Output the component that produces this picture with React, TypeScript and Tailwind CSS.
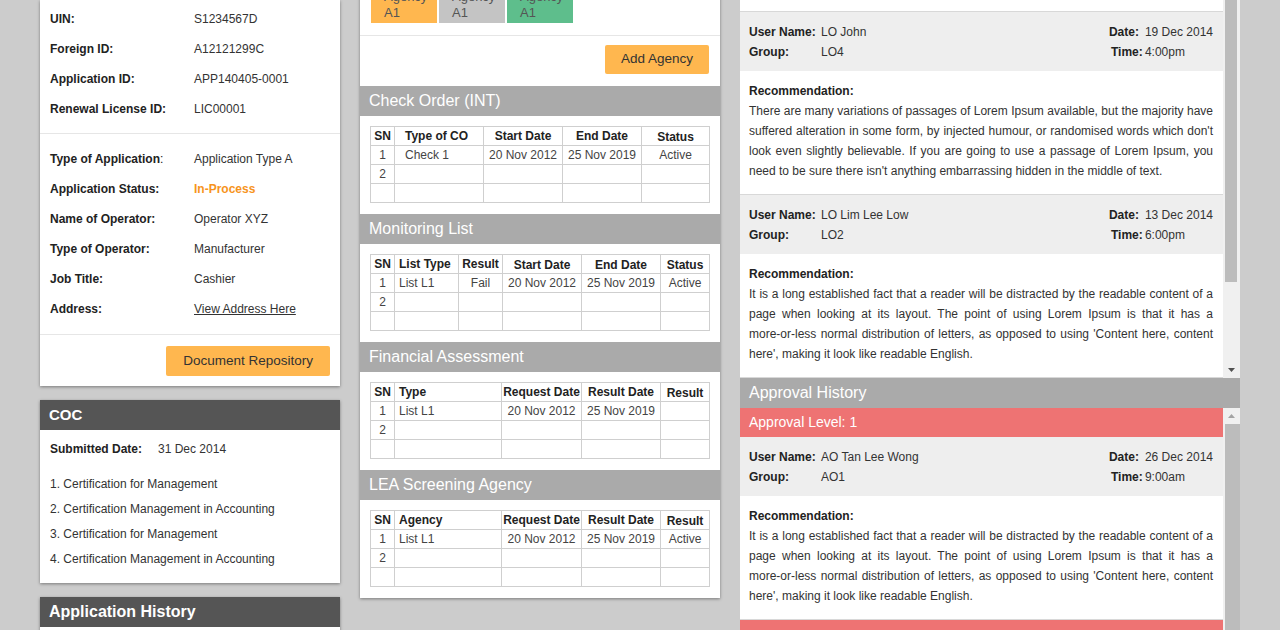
import React from 'react';

type Col = { label: string; w: number; left?: boolean; low?: boolean };

interface TableSpec {
  title: string;
  cols: Col[];
  rows: string[][];
}

const tables: TableSpec[] = [
  {
    title: 'Check Order (INT)',
    cols: [
      { label: 'SN', w: 24 },
      { label: 'Type of CO', w: 89, left: true },
      { label: 'Start Date', w: 79 },
      { label: 'End Date', w: 79 },
      { label: 'Status', w: 68, low: true },
    ],
    rows: [
      ['1', 'Check 1', '20 Nov 2012', '25 Nov 2019', 'Active'],
      ['2', '', '', '', ''],
      ['', '', '', '', ''],
    ],
  },
  {
    title: 'Monitoring List',
    cols: [
      { label: 'SN', w: 24 },
      { label: 'List Type', w: 64, left: true },
      { label: 'Result', w: 44 },
      { label: 'Start Date', w: 79, low: true },
      { label: 'End Date', w: 79, low: true },
      { label: 'Status', w: 49, low: true },
    ],
    rows: [
      ['1', 'List L1', 'Fail', '20 Nov 2012', '25 Nov 2019', 'Active'],
      ['2', '', '', '', '', ''],
      ['', '', '', '', '', ''],
    ],
  },
  {
    title: 'Financial Assessment',
    cols: [
      { label: 'SN', w: 24 },
      { label: 'Type', w: 107, left: true },
      { label: 'Request Date', w: 80 },
      { label: 'Result Date', w: 79 },
      { label: 'Result', w: 49, low: true },
    ],
    rows: [
      ['1', 'List L1', '20 Nov 2012', '25 Nov 2019', ''],
      ['2', '', '', '', ''],
      ['', '', '', '', ''],
    ],
  },
  {
    title: 'LEA Screening Agency',
    cols: [
      { label: 'SN', w: 24 },
      { label: 'Agency', w: 107, left: true },
      { label: 'Request Date', w: 80 },
      { label: 'Result Date', w: 79 },
      { label: 'Result', w: 49, low: true },
    ],
    rows: [
      ['1', 'List L1', '20 Nov 2012', '25 Nov 2019', 'Active'],
      ['2', '', '', '', ''],
      ['', '', '', '', ''],
    ],
  },
];

const InfoRow: React.FC<{ label: string; children: React.ReactNode }> = ({ label, children }) => (
  <div className="flex h-[30px] items-center">
    <span className="w-[144px] font-bold text-[#222]">{label}</span>
    <span className="text-[#333]">{children}</span>
  </div>
);

const DataTable: React.FC<{ spec: TableSpec }> = ({ spec }) => {
  const leftPad = spec.title === 'Check Order (INT)' ? 'pl-[10px] text-left' : 'pl-[4px] text-left';
  return (
    <div>
      <div className="h-[30px] bg-[#aaaaaa] pl-[9px] text-[16px] leading-[30px] text-white">{spec.title}</div>
      <div className="px-[10px] pt-[10px] pb-[11px]">
        <table className="w-[339px] table-fixed border-collapse">
          <colgroup>
            {spec.cols.map((c, i) => (
              <col key={i} style={{ width: c.w }} />
            ))}
          </colgroup>
          <thead>
            <tr className="h-[19px]">
              {spec.cols.map((c, i) => (
                <th
                  key={i}
                  className={`border border-[#cfcfcf] p-0 font-bold text-[#222] ${c.left ? leftPad : 'text-center'} ${
                    c.low ? 'pt-[2px] leading-[16px]' : 'leading-[17px]'
                  }`}
                >
                  {c.label}
                </th>
              ))}
            </tr>
          </thead>
          <tbody>
            {spec.rows.map((r, ri) => (
              <tr key={ri} className="h-[19px]">
                {r.map((v, ci) => (
                  <td
                    key={ci}
                    className={`border border-[#cfcfcf] p-0 leading-[18px] text-[#444] ${
                      spec.cols[ci].left ? leftPad : 'text-center'
                    }`}
                  >
                    {v}
                  </td>
                ))}
              </tr>
            ))}
          </tbody>
        </table>
      </div>
    </div>
  );
};

interface Entry {
  user: string;
  group: string;
  date: string;
  time: string;
  text: React.ReactNode;
}

const longText = (
  <>
    It is a long established fact that a reader will be distracted by the readable content of a page when looking at
    its layout. The point of using Lorem Ipsum is that it has a{' '}
    <span className="whitespace-nowrap">more-or-less</span> normal distribution of letters, as opposed to using
    'Content here, content here', making it look like readable English.
  </>
);

const recommendations: Entry[] = [
  {
    user: 'LO John',
    group: 'LO4',
    date: '19 Dec 2014',
    time: '4:00pm',
    text: "There are many variations of passages of Lorem Ipsum available, but the majority have suffered alteration in some form, by injected humour, or randomised words which don't look even slightly believable. If you are going to use a passage of Lorem Ipsum, you need to be sure there isn't anything embarrassing hidden in the middle of text.",
  },
  { user: 'LO Lim Lee Low', group: 'LO2', date: '13 Dec 2014', time: '6:00pm', text: longText },
];

const EntryBlock: React.FC<{ e: Entry }> = ({ e }) => (
  <div className="border-b border-[#d8d8d8]">
    <div className="flex justify-between bg-[#eeeeee] pt-[10px] pr-[10px] pb-[9px] pl-[9px] leading-[20px]">
      <div className="grid grid-cols-[72px_auto]">
        <span className="font-bold text-[#222]">User Name:</span>
        <span>{e.user}</span>
        <span className="font-bold text-[#222]">Group:</span>
        <span>{e.group}</span>
      </div>
      <div className="grid grid-cols-[36px_auto] whitespace-nowrap">
        <span className="font-bold text-[#222]">Date:</span>
        <span>{e.date}</span>
        <span className="pl-[2px] font-bold text-[#222]">Time:</span>
        <span>{e.time}</span>
      </div>
    </div>
    <div className="bg-white pt-[10px] pr-[10px] pb-[13px] pl-[9px] leading-[20px]">
      <div className="font-bold text-[#222]">Recommendation:</div>
      <p className="text-justify">{e.text}</p>
    </div>
  </div>
);

const Arrow: React.FC<{ up?: boolean; color: string }> = ({ up, color }) => (
  <svg width="7" height="4" viewBox="0 0 7 4">
    <path d={up ? 'M0 4h7L3.5 0z' : 'M0 0h7L3.5 4z'} fill={color} />
  </svg>
);

const Tag: React.FC<{ bg: string }> = ({ bg }) => (
  <div className={`w-[66px] ${bg} pt-[5px] pb-[2px] pl-[13px] text-[13px] leading-[16px] text-[#555]`}>
    <div>Agency</div>
    <div>A1</div>
  </div>
);

export default function App() {
  return (
    <div className="h-[630px] overflow-hidden bg-[#cccccc] font-['Liberation_Sans',Arial,sans-serif] text-[12px] text-[#333]">
      <div className="flex items-start gap-[20px] pl-[40px]">
        {/* left column */}
        <div className="w-[300px]">
          <div className="bg-white shadow-[0_1px_3px_rgba(0,0,0,0.4)]">
            <div className="border-b border-[#e6e6e6] px-[10px] pt-[4px] pb-[9px]">
              <InfoRow label="UIN:">S1234567D</InfoRow>
              <InfoRow label="Foreign ID:">A12121299C</InfoRow>
              <InfoRow label="Application ID:">APP140405-0001</InfoRow>
              <InfoRow label="Renewal License ID:">LIC00001</InfoRow>
            </div>
            <div className="border-b border-[#e6e6e6] px-[10px] pt-[10px] pb-[10px]">
              <div className="flex h-[30px] items-center">
                <span className="w-[144px] text-[#222]">
                  <span className="font-bold">Type of Application</span>:
                </span>
                <span>Application Type A</span>
              </div>
              <InfoRow label="Application Status:">
                <span className="font-bold text-[#f7941d]">In-Process</span>
              </InfoRow>
              <InfoRow label="Name of Operator:">Operator XYZ</InfoRow>
              <InfoRow label="Type of Operator:">Manufacturer</InfoRow>
              <InfoRow label="Job Title:">Cashier</InfoRow>
              <InfoRow label="Address:">
                <span className="underline">View Address Here</span>
              </InfoRow>
            </div>
            <div className="flex justify-end pt-[11px] pr-[10px] pb-[10px]">
              <button className="h-[30px] rounded-[2px] bg-[#ffb74f] px-[17px] text-[13.5px] text-[#333]">
                Document Repository
              </button>
            </div>
          </div>

          <div className="mt-[14px] bg-white shadow-[0_1px_3px_rgba(0,0,0,0.4)]">
            <div className="h-[30px] bg-[#555555] pl-[9px] text-[15px] leading-[30px] font-bold text-white">COC</div>
            <div className="px-[10px] pt-[9px] pb-[11px]">
              <div className="flex h-[20px] items-center">
                <span className="w-[108px] font-bold text-[#222]">Submitted Date:</span>
                <span>31 Dec 2014</span>
              </div>
              <ol className="mt-[13px] leading-[25px]">
                <li>1. Certification for Management</li>
                <li>2. Certification Management in Accounting</li>
                <li>3. Certification for Management</li>
                <li>4. Certification Management in Accounting</li>
              </ol>
            </div>
          </div>

          <div className="mt-[14px] bg-white shadow-[0_1px_3px_rgba(0,0,0,0.4)]">
            <div className="h-[30px] bg-[#555555] pl-[9px] text-[16px] leading-[30px] font-bold text-white">
              Application History
            </div>
            <div className="h-[60px]" />
          </div>
        </div>

        {/* middle column */}
        <div className="-mt-[16px] w-[360px] bg-white shadow-[0_1px_3px_rgba(0,0,0,0.4)]">
          <div className="flex gap-[2px] border-b border-[#e6e6e6] pb-[12px] pl-[11px]">
            <Tag bg="bg-[#ffb74f]" />
            <Tag bg="bg-[#c4c4c4]" />
            <Tag bg="bg-[#5ebe8c]" />
          </div>
          <div className="flex justify-end pt-[9px] pr-[11px] pb-[12px]">
            <button className="h-[29px] rounded-[2px] bg-[#ffb74f] px-[16px] text-[13.5px] text-[#333]">Add Agency</button>
          </div>
          {tables.map((t) => (
            <DataTable key={t.title} spec={t} />
          ))}
        </div>

        {/* right column */}
        <div className="flex w-[500px] flex-col">
          <div className="flex h-[378px] overflow-hidden">
            <div className="w-[483px] bg-white">
              <div className="h-[12px] border-b border-[#d8d8d8]" />
              {recommendations.map((e) => (
                <EntryBlock key={e.user} e={e} />
              ))}
            </div>
            <div className="flex w-[17px] flex-col bg-[#f0f0f0]">
              <div className="ml-[2px] h-[282px] w-[12px] bg-[#bcbcbc]" />
              <div className="flex-1" />
              <div className="flex h-[17px] items-center justify-center pr-[1px]">
                <Arrow color="#505050" />
              </div>
            </div>
          </div>

          <div className="h-[30px] bg-[#aaaaaa] pl-[9px] text-[16px] leading-[30px] text-white">Approval History</div>

          <div className="flex h-[222px] overflow-hidden">
            <div className="w-[483px] bg-white">
              <div className="h-[29px] bg-[#ee7373] pl-[9px] text-[14px] leading-[29px] text-white">Approval Level: 1</div>
              <EntryBlock
                e={{ user: 'AO Tan Lee Wong', group: 'AO1', date: '26 Dec 2014', time: '9:00am', text: longText }}
              />
              <div className="h-[29px] bg-[#ee7373]" />
            </div>
            <div className="flex w-[17px] flex-col bg-[#f0f0f0]">
              <div className="flex h-[16px] items-center justify-center pr-[1px]">
                <Arrow up color="#a3a3a3" />
              </div>
              <div className="ml-[2px] flex-1 bg-[#bcbcbc]" />
            </div>
          </div>
        </div>
      </div>
    </div>
  );
}
